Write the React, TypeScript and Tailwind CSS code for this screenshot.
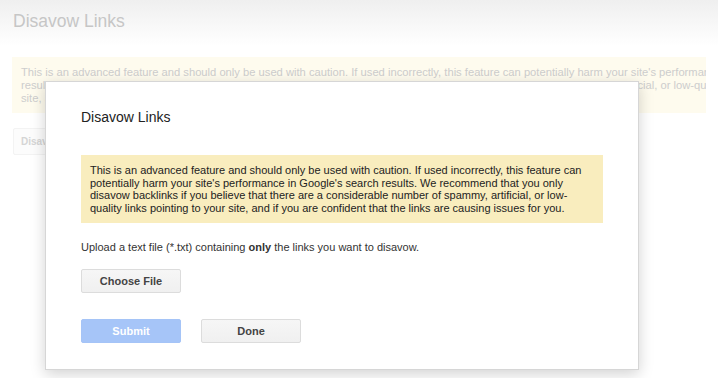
import React from "react";

const font = { fontFamily: '"Liberation Sans", Arial, Helvetica, sans-serif' };

const warning =
  "This is an advanced feature and should only be used with caution. If used incorrectly, this feature can potentially harm your site's performance in Google's search results. We recommend that you only disavow backlinks if you believe that there are a considerable number of spammy, artificial, or low-quality links pointing to your site, and if you are confident that the links are causing issues for you.";

export default function App() {
  return (
    <div
      className="relative w-[718px] h-[378px] overflow-hidden bg-white"
      style={font}
    >
      {/* Background page (faded under modal backdrop) */}
      <div className="h-[46px] bg-gradient-to-b from-[#efefef] to-white px-[13px] pt-[10px]">
        <h1 className="text-[17.5px] leading-[22px] text-[#c6c6c6]">Disavow Links</h1>
      </div>
      <div className="mx-[12px] mt-[11px] h-[56px] w-[694px] overflow-hidden bg-[#fefbee] pl-[9px] pt-[9px]">
        <p className="w-[830px] text-[11.2px] leading-[13px] text-[#cdcdcd]">{warning}</p>
      </div>
      <div className="ml-[13px] mt-[15px] flex h-[27px] w-[80px] items-center rounded-[2px] border border-[#f3f3f3] bg-[#fcfcfc] pl-[7px]">
        <span className="text-[10px] font-bold text-[#d5d5d5]">Disavow links</span>
      </div>

      {/* Modal dialog */}
      <div className="absolute left-[45px] top-[81px] w-[594px] h-[289px] border border-[#d6d6d6] bg-white px-[35px] shadow-[0_4px_14px_rgba(0,0,0,0.18)]">
        <h2 className="pt-[25px] text-[14px] leading-[20px] text-[#222]">Disavow Links</h2>
        <div className="mt-[28px] bg-[#f9edbe] px-[9px] pt-[9px] pb-[9px]">
          <p className="text-[11px] leading-[12.5px] text-[#222]">{warning}</p>
        </div>
        <p className="mt-[17px] text-[11px] leading-[14px] text-[#333]">
          Upload a text file (*.txt) containing <b>only</b> the links you want to disavow.
        </p>
        <button className="mt-[15px] flex h-[24px] w-[100px] items-center justify-center rounded-[2px] border border-[#dcdcdc] bg-gradient-to-b from-[#f6f6f6] to-[#f0f0f0] text-[11px] font-bold text-[#444]">
          Choose File
        </button>
        <div className="mt-[26px] flex gap-[20px]">
          <button className="flex h-[24px] w-[100px] items-center justify-center rounded-[2px] border border-[#a5c4f7] bg-[#a6c5f8] text-[11px] font-bold text-white">
            Submit
          </button>
          <button className="flex h-[24px] w-[100px] items-center justify-center rounded-[2px] border border-[#dcdcdc] bg-gradient-to-b from-[#f6f6f6] to-[#f0f0f0] text-[11px] font-bold text-[#444]">
            Done
          </button>
        </div>
      </div>
    </div>
  );
}
